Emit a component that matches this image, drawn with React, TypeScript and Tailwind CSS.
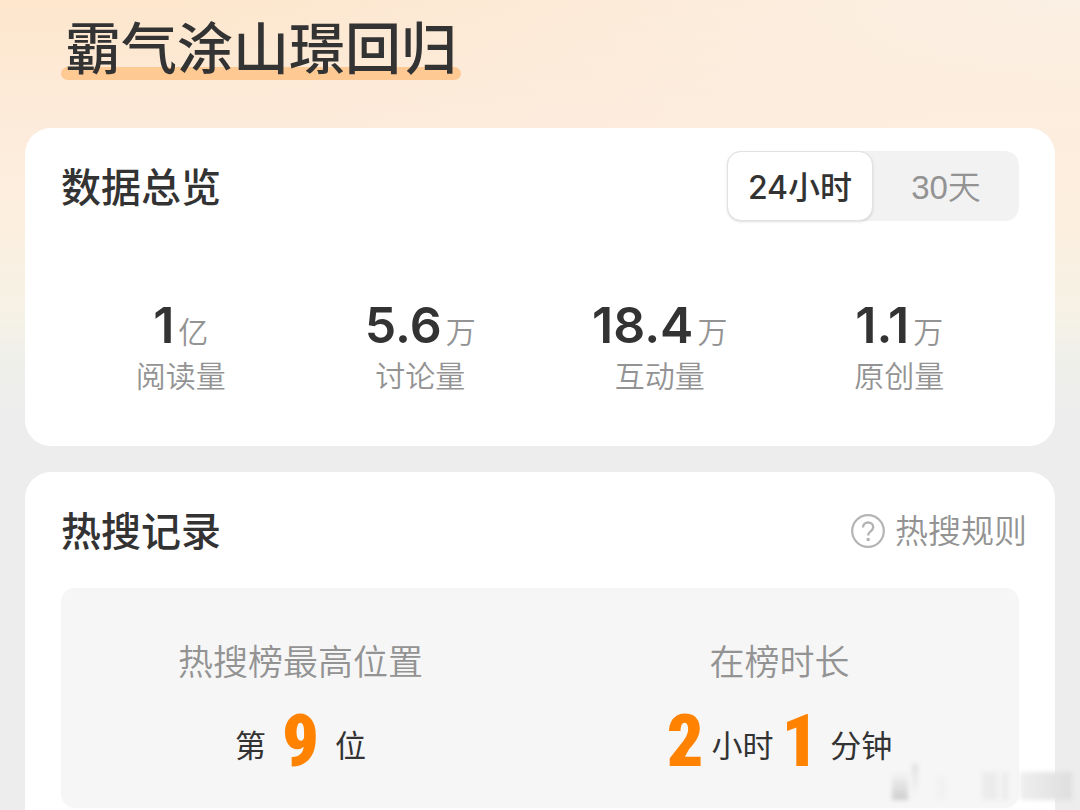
import { useState } from "react";

const STATS = [
  { value: "1", unit: "亿", label: "阅读量" },
  { value: "5.6", unit: "万", label: "讨论量" },
  { value: "18.4", unit: "万", label: "互动量" },
  { value: "1.1", unit: "万", label: "原创量" },
];

const RANGES = ["24小时", "30天"];

function HelpIcon() {
  return (
    <svg width="34" height="34" viewBox="0 0 34 34" fill="none" aria-hidden="true">
      <circle cx="17" cy="17" r="15.8" stroke="#b4b4b4" strokeWidth="2.2" />
      <path
        d="M12 13.4c0-2.8 2.1-4.9 5.1-4.9s5.1 2 5.1 4.6c0 2-1 3.1-2.7 4.3-1.6 1.2-2.3 2-2.3 4.2"
        stroke="#b4b4b4"
        strokeWidth="2.4"
      />
      <circle cx="17.2" cy="25.5" r="1.8" fill="#b4b4b4" />
    </svg>
  );
}

function BigNumber({ children }: { children: string }) {
  return (
    <span className="font-['Roboto_Condensed','Liberation_Sans',sans-serif] text-[72px] leading-[72px] font-black text-[#ff8200]">
      {children}
    </span>
  );
}

export default function App() {
  const [range, setRange] = useState(RANGES[0]);

  return (
    <main className="relative flex min-h-screen flex-col overflow-hidden bg-[#ededed] font-['Inter','Noto_Sans_CJK_SC',sans-serif] text-[#333]">
      {/* Warm glow behind the header */}
      <div className="absolute inset-x-0 top-0 h-[410px] bg-[linear-gradient(to_bottom,#fde6cc_0%,#fdebda_28%,#fcefe0_55%,#f6f2e5_75%,#efefea_88%,#ededed_100%)]" />
      <div className="absolute inset-x-0 top-0 h-[240px] bg-radial-[at_100%_0%] from-[#fbf0e5] to-transparent to-60%" />

      <header className="relative h-32 px-[61px] pt-3">
        <h1 className="relative inline-block px-1 pt-[3px] text-[56px] leading-[68px] font-medium">
          <span className="absolute inset-x-0 top-[55px] h-[13px] rounded-full bg-[#ffc993]" />
          <span className="relative">霸气涂山璟回归</span>
        </h1>
      </header>

      <section className="relative mx-[25px] h-[318px] rounded-[26px] bg-white px-9 pt-[23px]">
        <div className="flex items-start justify-between">
          <h2 className="pt-0.5 text-[40px] leading-[70px] font-medium">数据总览</h2>
          <div className="grid w-[292px] grid-cols-2 rounded-[14px] bg-[#f2f2f2]">
            {RANGES.map((item) => (
              <button
                key={item}
                type="button"
                aria-pressed={range === item}
                onClick={() => setRange(item)}
                className={
                  range === item
                    ? "h-[70px] rounded-[14px] border border-[#e2e2e2] bg-white pt-1 text-[32px] font-medium shadow-sm"
                    : "h-[70px] rounded-[14px] pt-1 font-['Liberation_Sans','Noto_Sans_CJK_SC',sans-serif] text-[33px] font-[350] text-[#939393]"
                }
              >
                {item}
              </button>
            ))}
          </div>
        </div>

        <dl className="mt-[72px] grid grid-cols-4 text-center">
          {STATS.map(({ value, unit, label }) => (
            <div key={label} className="flex flex-col-reverse">
              <dt className="text-[30px] leading-7 font-[350] text-[#939393]">{label}</dt>
              <dd className="flex items-baseline justify-center gap-1 text-[50px] leading-[60px] font-semibold">
                {value}
                <span className="text-[30px] font-[350] text-[#939393]">{unit}</span>
              </dd>
            </div>
          ))}
        </dl>
      </section>

      <section className="relative mx-[25px] mt-[26px] flex-1 rounded-t-[26px] bg-white px-9 pt-[23px]">
        <div className="flex items-start justify-between">
          <h2 className="pt-0.5 text-[40px] leading-[70px] font-medium">热搜记录</h2>
          <a href="#rules" className="mt-4 -mr-2 flex items-center gap-2.5 text-[33px] leading-10 font-[350] text-[#939393]">
            <HelpIcon />
            热搜规则
          </a>
        </div>

        <dl className="mt-[21px] grid h-[220px] grid-cols-2 rounded-[14px] bg-[#f6f6f6] pt-[50px] text-center">
          <div>
            <dt className="text-[35px] leading-12 font-[350] text-[#939393]">热搜榜最高位置</dt>
            <dd className="mt-5 flex items-center justify-center gap-4 text-[31px] leading-10">
              <span className="pt-2">第</span>
              <BigNumber>9</BigNumber>
              <span className="pt-2">位</span>
            </dd>
          </div>
          <div>
            <dt className="text-[35px] leading-12 font-[350] text-[#939393]">在榜时长</dt>
            <dd className="mt-5 flex items-center justify-center gap-2 text-[31px] leading-10">
              <BigNumber>2</BigNumber>
              <span className="pt-2">小时</span>
              <BigNumber>1</BigNumber>
              <span className="pt-2 pl-1">分钟</span>
            </dd>
          </div>
        </dl>
      </section>

      {/* Faded smear in the bottom corner */}
      <div className="absolute right-2 bottom-2.5 flex h-9 w-[184px] items-end blur-[2px]">
        <span className="ml-1 h-7 w-4 bg-linear-to-b from-transparent to-[#cdcdcd]" />
        <span className="ml-1 h-8 w-1.5 self-start bg-linear-to-b from-[#e0e0e0] to-transparent" />
        <span className="ml-5 h-6 w-2 bg-[#f1f1f1]" />
        <span className="ml-9 h-7 w-4 bg-[#ececec]" />
        <span className="ml-1 h-7 w-1.5 bg-[#ebebeb]" />
        <span className="ml-3 h-7 flex-1 bg-linear-to-r from-[#efefef] to-[#dedede]" />
      </div>
    </main>
  );
}
